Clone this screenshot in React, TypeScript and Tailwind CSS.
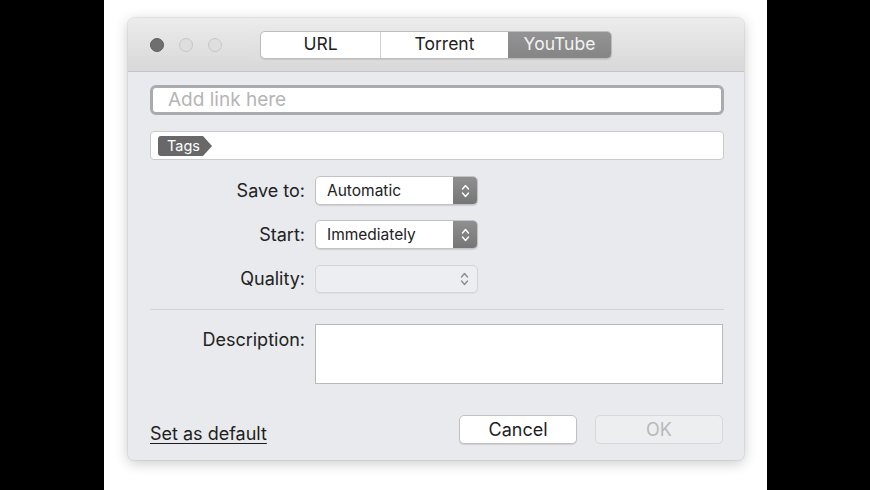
import { ReactNode } from 'react'

const font = { fontFamily: 'Inter, "Liberation Sans", sans-serif' }

function Chevrons({ color = '#ffffff' }: { color?: string }) {
  return (
    <svg width="9" height="16" viewBox="0 0 9 16" fill="none">
      <path d="M1.5 6 L4.5 2.5 L7.5 6" stroke={color} strokeWidth="1.4" strokeLinecap="round" strokeLinejoin="round" />
      <path d="M1.5 10 L4.5 13.5 L7.5 10" stroke={color} strokeWidth="1.4" strokeLinecap="round" strokeLinejoin="round" />
    </svg>
  )
}

function Select({ value, disabled }: { value?: string; disabled?: boolean }) {
  if (disabled) {
    return (
      <div className="flex h-[28px] w-[163px] items-center justify-end rounded-[5px] border border-[#d3d5d8] bg-[#eceef1] pr-[8px] shadow-[0_1px_0_rgba(0,0,0,0.04)]">
        <Chevrons color="#8e8e8e" />
      </div>
    )
  }
  return (
    <div className="flex h-[29px] w-[163px] overflow-hidden rounded-[5px] border border-[#c3c3c3] bg-white shadow-[0_1px_1px_rgba(0,0,0,0.12)]">
      <div className="flex flex-1 items-center pl-[11px] text-[15.5px] text-[#222]">{value}</div>
      <div className="flex w-[24px] items-center justify-center bg-gradient-to-b from-[#8f8f8f] to-[#767676]">
        <Chevrons />
      </div>
    </div>
  )
}

function Row({ label, children }: { label: string; children: ReactNode }) {
  return (
    <div className="flex h-[29px] items-center">
      <div className="w-[155px] text-right text-[18px] leading-[22px] text-[#222]">{label}</div>
      <div className="ml-[10px]">{children}</div>
    </div>
  )
}

export default function App() {
  return (
    <div className="flex h-[490px] w-[870px] bg-black" style={font}>
      <div className="w-[104px]" />
      <div className="flex-1 bg-white pl-[24px] pt-[18px]">
        <div className="flex h-[442px] w-[616px] flex-col overflow-hidden rounded-[6px] bg-[#e8eaed] shadow-[0_3px_14px_rgba(0,0,0,0.22),0_0_0_1px_rgba(0,0,0,0.06)]">
          {/* title bar */}
          <div className="flex h-[54px] items-center border-b border-[#c6c6c6] bg-gradient-to-b from-[#ececec] to-[#d8d8d8] pl-[22px]">
            <div className="flex items-center gap-[15px]">
              <div className="h-[14px] w-[14px] rounded-full border border-[#5e5e5e] bg-[#6f6f6f]" />
              <div className="h-[14px] w-[14px] rounded-full border border-[#c6c6c6] bg-[#dedede]" />
              <div className="h-[14px] w-[14px] rounded-full border border-[#c6c6c6] bg-[#dedede]" />
            </div>
            <div className="ml-[38px] flex h-[28px] w-[352px] overflow-hidden rounded-[5px] border border-[#bdbdbd] bg-white text-[17.5px] shadow-[0_1px_1px_rgba(0,0,0,0.1)]">
              <div className="flex w-[120px] items-center justify-center border-r border-[#d0d0d0] text-[#1e1e1e]">URL</div>
              <div className="flex w-[127px] items-center justify-center text-[#1e1e1e]">Torrent</div>
              <div className="flex flex-1 items-center justify-center bg-gradient-to-b from-[#939393] to-[#858585] text-[#f2f2f2]">YouTube</div>
            </div>
          </div>

          {/* body */}
          <div className="flex flex-1 flex-col pl-[22px] pr-[20px]">
            <div className="mt-[13px] flex h-[30px] items-center rounded-[6px] border-[3px] border-[#a9abae] bg-white pl-[15px] text-[19px] text-[#b5b5b5]">
              Add link here
            </div>

            <div className="mt-[16px] flex h-[29px] items-center rounded-[4px] border border-[#c9cacc] bg-white pl-[7px]">
              <div className="flex h-[20px] items-center">
                <div className="flex h-full items-center rounded-l-[3px] bg-[#686868] pl-[9px] pr-[3px] text-[14.5px] text-white">Tags</div>
                <div className="h-0 w-0 border-y-[10px] border-l-[9px] border-y-transparent border-l-[#686868]" />
              </div>
            </div>

            <div className="mt-[16px] flex flex-col gap-[15px]">
              <Row label="Save to:">
                <Select value="Automatic" />
              </Row>
              <Row label="Start:">
                <Select value="Immediately" />
              </Row>
              <Row label="Quality:">
                <Select disabled />
              </Row>
            </div>

            <div className="mt-[16px] h-px bg-[#d2d4d7]" />

            <div className="mt-[14px] flex items-start">
              <div className="w-[155px] pt-[2px] text-right text-[18px] text-[#222]">Description:</div>
              <div className="ml-[10px] mr-px h-[60px] flex-1 border border-[#b9babc] bg-white" />
            </div>

            <div className="mt-[31px] flex h-[29px] items-center">
              <span className="translate-y-[4px] text-[18px] leading-[22px] text-[#1e1e1e] underline underline-offset-[3px]">Set as default</span>
              <div className="ml-auto flex gap-[18px]">
                <div className="flex h-[29px] w-[118px] items-center justify-center rounded-[5px] border border-[#c2c2c2] bg-white text-[18px] text-[#1e1e1e] shadow-[0_1px_1px_rgba(0,0,0,0.12)]">
                  Cancel
                </div>
                <div className="mr-px flex h-[29px] w-[128px] items-center justify-center rounded-[5px] border border-[#d6d8db] bg-[#eceef0] text-[18px] text-[#b9b9b9]">
                  OK
                </div>
              </div>
            </div>
          </div>
        </div>
      </div>
      <div className="w-[103px]" />
    </div>
  )
}
